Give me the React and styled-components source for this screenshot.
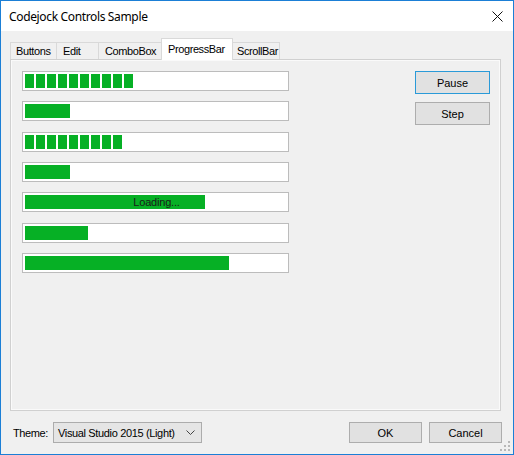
import React from 'react';
import styled, { createGlobalStyle } from 'styled-components';

const GlobalStyle = createGlobalStyle`
  html, body { margin: 0; padding: 0; background: #fff; }
  body { font-family: "Liberation Sans", Arial, sans-serif; color: #000; }
  * { box-sizing: border-box; }
`;

const Window = styled.div`
  position: relative;
  width: 514px;
  height: 455px;
  border: 1px solid #1b7fd6;
  background: #f0f0f0;
  display: flex;
  flex-direction: column;
`;

const TitleBar = styled.div`
  height: 30px;
  flex: none;
  background: #fff;
  display: flex;
  align-items: center;
  padding: 0 10px 0 8px;
`;

const Title = styled.div`
  flex: 1;
  font-family: "Segoe UI", "Noto Sans", sans-serif;
  font-size: 12px;
  letter-spacing: -0.35px;
  color: #000;
`;

const CloseIcon = styled.svg`
  width: 11px;
  height: 11px;
  display: block;
`;

const Body = styled.div`
  flex: 1;
  min-height: 0;
  display: flex;
  flex-direction: column;
  padding: 7px 12px 0 9px;
`;

const TabStrip = styled.div`
  flex: none;
  height: 21px;
  display: flex;
  align-items: flex-end;
  position: relative;
  z-index: 1;
`;

const Tab = styled.div`
  width: ${p => p.$w}px;
  height: ${p => (p.$active ? 22 : 17)}px;
  margin-bottom: ${p => (p.$active ? -1 : 0)}px;
  margin-left: ${p => (p.$first ? 0 : -1)}px;
  border: 1px solid #d9d9d9;
  border-bottom: none;
  background: ${p => (p.$active ? '#ffffff' : '#f0f0f0')};
  display: flex;
  align-items: center;
  padding: 0 0 ${p => (p.$active ? 2 : 0)}px ${p => p.$pl}px;
  font-size: 11px;
  letter-spacing: -0.4px;
  white-space: nowrap;
  position: relative;
  z-index: ${p => (p.$active ? 2 : 1)};
`;

const Panel = styled.div`
  flex: 1;
  min-height: 0;
  border: 1px solid #d0d0d0;
  box-shadow: inset 0 0 0 1px #fafafa;
  background: #f0f0f0;
  display: flex;
  padding: 11px 10px 0 11px;
`;

const BarColumn = styled.div`
  display: flex;
  flex-direction: column;
  gap: 10.33px;
`;

const Track = styled.div`
  width: 267px;
  height: 20px;
  border: 1px solid #bcbcbc;
  background: #fff;
  padding: 2px;
  display: grid;
`;

const Fill = styled.div`
  grid-area: 1 / 1;
  width: ${p => p.$w}px;
  height: 14px;
  background: #06b025;
`;

const Chunks = styled.div`
  grid-area: 1 / 1;
  display: flex;
  gap: 2px;
  height: 14px;
`;

const Chunk = styled.div`
  width: 9px;
  height: 14px;
  background: #06b025;
`;

const BarLabel = styled.div`
  grid-area: 1 / 1;
  display: flex;
  align-items: center;
  justify-content: center;
  font-size: 11px;
  letter-spacing: -0.2px;
  color: #1a1a1a;
  line-height: 14px;
  padding-left: 2px;
`;

const ButtonColumn = styled.div`
  margin-left: auto;
  display: flex;
  flex-direction: column;
  gap: 8px;
`;

const PushButton = styled.div`
  width: ${p => p.$w || 75}px;
  height: ${p => p.$h || 23}px;
  border-width: 1px;
  border-style: solid;
  border-color: ${p => (p.$focused ? '#2a9ad8' : '#adadad')};
  background: #e1e1e1;
  font-family: "Liberation Sans", Arial, sans-serif;
  font-size: 11px;
  color: #000;
  display: flex;
  align-items: center;
  justify-content: center;
  cursor: default;
  user-select: none;
`;

const Footer = styled.div`
  flex: none;
  height: 43px;
  display: flex;
  align-items: center;
  padding-left: 3px;
  margin-right: -1px;
`;

const Label = styled.span`
  width: 40px;
  font-size: 11px;
  letter-spacing: -0.4px;
`;

const Combo = styled.div`
  width: 149px;
  height: 21px;
  border: 1px solid #acacac;
  background: #e5e5e5;
  display: flex;
  align-items: center;
  padding: 0 6px 0 4px;
  font-size: 11px;
  letter-spacing: -0.35px;
`;

const ComboText = styled.span`
  flex: 1;
  white-space: nowrap;
`;

const Chevron = styled.svg`
  width: 9px;
  height: 5px;
  display: block;
`;

const FooterButtons = styled.div`
  margin-left: auto;
  display: flex;
  gap: 7px;
`;

const Gripper = styled.svg`
  position: absolute;
  right: 2px;
  bottom: 2px;
  width: 11px;
  height: 11px;
`;

const tabs = [
  { label: 'Buttons', w: 47, pl: 5 },
  { label: 'Edit', w: 43, pl: 6 },
  { label: 'ComboBox', w: 64, pl: 6 },
  { label: 'ProgressBar', w: 72, pl: 6, active: true },
  { label: 'ScrollBar', w: 48, pl: 4 },
];

const bars = [
  { chunks: 10 },
  { fill: 45 },
  { chunks: 9 },
  { fill: 45 },
  { fill: 180, label: 'Loading...' },
  { fill: 63 },
  { fill: 204 },
];

function ProgressBar({ chunks, fill, label }) {
  return (
    <Track>
      {chunks ? (
        <Chunks>
          {Array.from({ length: chunks }).map((_, i) => (
            <Chunk key={i} />
          ))}
        </Chunks>
      ) : (
        <Fill $w={fill} />
      )}
      {label && <BarLabel>{label}</BarLabel>}
    </Track>
  );
}

export default function App() {
  return (
    <>
      <GlobalStyle />
      <Window>
        <TitleBar>
          <Title>Codejock Controls Sample</Title>
          <CloseIcon viewBox="0 0 11 11">
            <path d="M0.5 0.5 L10.5 10.5 M10.5 0.5 L0.5 10.5" stroke="#111" strokeWidth="1" fill="none" />
          </CloseIcon>
        </TitleBar>
        <Body>
          <TabStrip>
            {tabs.map((t, i) => (
              <Tab key={t.label} $w={t.w} $pl={t.pl} $active={t.active} $first={i === 0}>
                {t.label}
              </Tab>
            ))}
          </TabStrip>
          <Panel>
            <BarColumn>
              {bars.map((b, i) => (
                <ProgressBar key={i} {...b} />
              ))}
            </BarColumn>
            <ButtonColumn>
              <PushButton role="button" $focused>Pause</PushButton>
              <PushButton role="button">Step</PushButton>
            </ButtonColumn>
          </Panel>
          <Footer>
            <Label>Theme:</Label>
            <Combo>
              <ComboText>Visual Studio 2015 (Light)</ComboText>
              <Chevron viewBox="0 0 9 5">
                <path d="M0.5 0.5 L4.5 4.5 L8.5 0.5" stroke="#444" strokeWidth="1" fill="none" />
              </Chevron>
            </Combo>
            <FooterButtons>
              <PushButton role="button" $w={73} $h={21}>OK</PushButton>
              <PushButton role="button" $w={73} $h={21}>Cancel</PushButton>
            </FooterButtons>
          </Footer>
        </Body>
        <Gripper viewBox="0 0 11 11">
          <g fill="#b8b8b8">
            <rect x="8" y="0" width="2" height="2" />
            <rect x="4" y="4" width="2" height="2" />
            <rect x="8" y="4" width="2" height="2" />
            <rect x="0" y="8" width="2" height="2" />
            <rect x="4" y="8" width="2" height="2" />
            <rect x="8" y="8" width="2" height="2" />
          </g>
        </Gripper>
      </Window>
    </>
  );
}
